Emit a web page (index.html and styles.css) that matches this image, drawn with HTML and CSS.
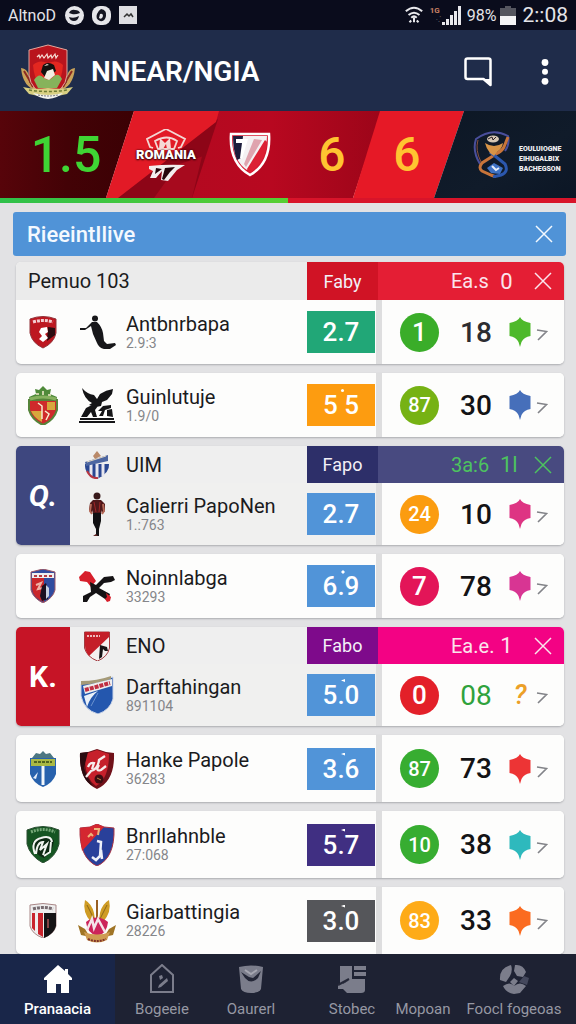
FILE: index.html
```html
<!DOCTYPE html>
<html lang="en">
<head>
<meta charset="utf-8">
<meta name="viewport" content="width=device-width, initial-scale=1">
<title>NNEAR/NGIA</title>
<link rel="stylesheet" href="styles.css">
</head>
<body>
<svg class="defs" aria-hidden="true">
  <symbol id="close" viewBox="0 0 18 18"><path d="M1 1 17 17M17 1 1 17" fill="none" stroke="currentColor" stroke-width="1.5"/></symbol>
  <symbol id="next" viewBox="0 0 12 14"><path d="M1 2 10.500 3.500 2 12" fill="none" stroke="currentColor" stroke-width="1.600"/></symbol>
  <symbol id="badge" viewBox="0 0 22 30"><path d="M11 0Q13 4.500 21.500 6V19Q15 20 12.500 25L11 30 9.500 25Q7 20 .5 19V6Q9 4.500 11 0Z" fill="currentColor"/></symbol>
</svg>

<div class="status">
  <span class="carrier">AltnoD</span>
  <svg width="19" height="19" viewBox="0 0 19 19"><circle cx="9.500" cy="9.500" r="9.500" fill="#e6e6ea"/><path d="M4 7q2-4 6-3 4 0 5 3-5 2-8 1M4 11q5 2 10-1-1 5-5 5-4 0-5-4z" fill="#151622"/></svg>
  <svg class="gap-a" width="19" height="19" viewBox="0 0 19 19"><rect width="19" height="19" rx="8" fill="#e6e6ea"/><path d="M9 3q6 1 5 7-1 6-6 5-5-2-3-7 1-3 4-5z" fill="#151622"/><path d="M8 8q3-1 3 2-1 4-4 2z" fill="#e6e6ea"/></svg>
  <svg class="gap-a" width="18" height="18" viewBox="0 0 18 18"><rect width="18" height="18" fill="#dedee2"/><path d="m5 11 3-3 2 2 2-2 2 3" fill="none" stroke="#333" stroke-width="1.500"/></svg>
  <span class="spacer"></span>
  <svg width="20" height="20" viewBox="0 0 22 20" fill="none" stroke="#e8e8ec" stroke-width="2.200"><path d="M2 6q9-8 18 0M5 10q6-5 12 0M8 13q3-3 6 0M11 13v5M6 18l2-2M16 18l-2-2"/></svg>
  <span class="network"><b>1G</b><i>·⁚</i></span>
  <svg width="19" height="19" viewBox="0 0 19 19" fill="#e8e8ec"><path d="M0 19v-3h3v3zM4 19v-6h3v6zM8 19V9h3v10zM12 19V5h3v14zM16 19V0h3v19z"/></svg>
  <span class="percent">98%</span>
  <svg width="16" height="19" viewBox="0 0 16 19"><path d="M5 0h6v2h5v8H0V2h5z" fill="#55565f"/><path d="M0 10h16v9H0z" fill="#f4f4f6"/></svg>
  <time class="clock">2::08</time>
</div>

<header class="appbar">
  <svg class="club" viewBox="0 0 56 56" width="56" height="56">
    <path d="M1 24q9 1 8 14l8 8Q3 44 1 24zM55 24q-9 1-8 14l-8 8Q53 44 55 24z" fill="#c9a35a"/>
    <path d="M4 27q5 8 9 16M52 27q-5 8-9 16" stroke="#8c2a20" stroke-width="2" fill="none"/>
    <path d="M9 6 28 1l19 5v25q-2 16-19 21Q11 47 9 31z" fill="#b9141d" stroke="#e2a79d"/>
    <path d="M13 21q6-6 15-2 9-4 15 2-1 14-6 18H19q-5-5-6-18z" fill="#e32720"/>
    <path d="M14 36q5-8 10-2 4 3 8 0 6-7 10 1l-5 9H18z" fill="#86b35b"/>
    <path d="M23 21q5-4 11 0l2 6-4 3q-2 5-6 4l-5-6z" fill="#14110f"/>
    <path d="m27 27 6-2 2 6-6 5-5-2zM24 22l3-2 2 1z" fill="#f3eee2"/>
    <path d="M3 43q10 3 25 1 15 2 25-1l-6 7q-19 5-38 0z" fill="#d8cf82"/>
    <path d="M9 46q19 3 38 0" stroke="#6f7d34" stroke-width="1.500" stroke-dasharray="3 2" fill="none"/>
    <path d="M13 49q15 4 30 0-5 5-15 6-10-1-15-6z" fill="#f2f2ee"/>
    <path d="M18 51q10 2 20 0" stroke="#777" stroke-dasharray="2 1" fill="none"/>
    <path d="m17 13 2-2 1 3 2-3 2 3 3-4 1 4 3-3 1 3 3-4 1 4 2-3" fill="none" stroke="#f6dcd4" stroke-width="1.200"/>
  </svg>
  <h1>NNEAR/NGIA</h1>
  <button class="icon" type="button" aria-label="Messages"><svg width="28" height="30" viewBox="0 0 28 30"><path d="M3.500 1.500h21q2 0 2 2V28l-7-6h-16q-2 0-2-2V3.500q0-2 2-2z" fill="none" stroke="#fff" stroke-width="2.500" stroke-linejoin="round"/><path d="m19 22 7 6v-6z" fill="#fff"/></svg></button>
  <button class="icon more" type="button" aria-label="More options"><svg width="8" height="26" viewBox="0 0 8 26" fill="#fff"><circle cx="4" cy="3.500" r="3.400"/><circle cx="4" cy="12.800" r="3"/><circle cx="4" cy="22.300" r="3.400"/></svg></button>
</header>

<section class="banner">
  <svg class="panels" viewBox="0 0 576 88" preserveAspectRatio="none" aria-hidden="true">
    <defs>
      <linearGradient id="dark"><stop offset="0" stop-color="#57040a"/><stop offset=".5" stop-color="#430206"/><stop offset="1" stop-color="#3b0104"/></linearGradient>
      <linearGradient id="mid"><stop offset="0" stop-color="#b00a20"/><stop offset=".6" stop-color="#b80820"/><stop offset="1" stop-color="#9c0519"/></linearGradient>
      <linearGradient id="navy" x2="1" y2="1"><stop offset="0" stop-color="#0d1725"/><stop offset=".6" stop-color="#101b2a"/><stop offset="1" stop-color="#0c1625"/></linearGradient>
    </defs>
    <path d="M0 0h134l-28 88H0z" fill="url(#dark)"/>
    <path d="M218 0h164l-29 88H106z" fill="url(#mid)"/>
    <path d="m218 8-26 80h-86z" fill="#8d0517"/>
    <path d="m178 54-24 34h38l10-42z" fill="#a70a1e"/>
    <path d="M134 0h85l-3 11-98 77h-12z" fill="#e21a26"/>
    <path d="M380 0h84l-30 88h-81z" fill="#e61926"/>
    <path d="M464 0h112v88H434z" fill="url(#navy)"/>
  </svg>
  <div class="slots">
    <strong class="odds">1.5</strong>
    <div class="romania">
      <svg width="46" height="52" viewBox="0 0 46 52" aria-hidden="true"><path d="m10 19-3-1-3-8L19 2l4-2 4 2 15 8-4 8-3 1M12 12q12-7 22 0l-3 8H15z" fill="none" stroke="#f4d7d4" stroke-width="1.800"/><path d="m17 9 5 5 5-5 1 11h-4l-1-5-3 5h-4z" fill="#f6d9d6"/><path d="M6 37q18-2 36-1l-8 5-9 11-7-1 1-9-6 7H7l3-7-4-2z" fill="#f3eeee"/><path d="m22 39 10-1-5 5-6 8-2-1zM13 39l6 1-7 5z" fill="#25060c"/></svg>
      <span>ROMANIA</span>
    </div>
    <svg width="42" height="45" viewBox="0 0 42 45" aria-hidden="true"><path d="M2 2h38q2 29-19 41Q0 31 2 2z" fill="#d51931" stroke="#fff" stroke-width="2.500"/><path d="M4 4h34q0 9-4 16L18 38Q3 28 4 4z" fill="#f4f1f3"/><path d="M4 4h10l-2 22-4 2Q4 18 4 4z" fill="#1d1d3c"/><path d="M7 7h12l-6 20-2-1 2-15H7z" fill="#fff"/><path d="m25 7 8 1-16 27-2-3z" fill="#dfa3ae"/><path d="m36 8 2 2q-1 20-17 31l-3-4z" fill="#dc2034"/></svg>
    <strong class="six">6</strong>
    <strong class="six">6</strong>
    <div class="sponsor">
      <svg width="38" height="47" viewBox="0 0 38 47" aria-hidden="true" fill="none"><path d="M7 33Q-1 20 3 8 19-4 35 5q2 8-3 15" stroke="#4a4f9c" stroke-width="2"/><path d="M8 31Q2 19 5 9" stroke="#8a513f"/><path d="m35 6-4 10q-2 4-8 7L9 32q-4 5 0 8l9 4 5 2" stroke="#c8743a" stroke-width="3"/><path d="m17 21 5 4 10 8q4 8-4 11l-8 2" stroke="#2b57ae" stroke-width="3"/><path d="M12 12q9 6 18 0-1 6-6 9l-3 4-4-3q-4-5-5-10z" fill="#d79447"/><ellipse cx="20" cy="8" rx="6" ry="3.500" fill="#d6c7b4"/><path d="m15 8 4-2 1 3 3-3" stroke="#2a2026"/><path d="m14 37 7-5 9 5-3 6-9-1z" fill="#3f72c4"/><path d="m19 35 4 4 3-2" stroke="#e7edf8" stroke-width="2"/></svg>
      <p>EOULUIOGNE<br>EIHUGALBIX<br>BACHEGSON</p>
    </div>
  </div>
</section>
<div class="track"><div class="fill"></div></div>

<main>
  <div class="section-bar">
    <h2>RieeintIlive</h2>
    <button type="button" aria-label="Close RieeintIlive"><svg width="18" height="18"><use href="#close"/></svg></button>
  </div>

  <article class="card">
    <div class="head red">
      <h3>Pemuo 103</h3><span class="tab">Faby</span>
      <div class="bar"><span class="stat">Ea.s</span><span class="count">0</span><button type="button" aria-label="Close"><svg width="18" height="18"><use href="#close"/></svg></button></div>
    </div>
    <div class="row">
      <svg width="28" height="33" viewBox="0 0 28 33"><path d="M1 3q13-5 26 0v14q-2 10-13 15Q3 27 1 17z" fill="#bd1720" stroke="#91333a"/><path d="M4 6q10-3 20 0" stroke="#f3cdd0" stroke-width="3" stroke-dasharray="3 1" fill="none"/><path d="m19 11 7 1v7l-8 6z" fill="#2c0c10"/><path d="m12 12 6-1 1 5-3 2 3 4-5 4-4-3 3-3-3-4z" fill="#fff"/></svg>
      <svg width="37" height="35" viewBox="0 0 37 35"><circle cx="16" cy="3.500" r="3" fill="#17171a"/><path d="M1 13h6l6-6 5 0q5 5 6 11l1 8 3 3 8-1 1 2-6 4h-6q-5-1-7-6l-4-9-2-8-6 4H1z" fill="#17171a"/></svg>
      <div class="team"><b>Antbnrbapa</b><small>2.9:3</small></div>
      <div class="tile green">2.7</div>
      <div class="result"><span class="ball single g1">1</span><span class="num soft">18</span><svg class="mark m-green"><use href="#badge"/></svg><a href="#t1" aria-label="Open Antbnrbapa"><svg width="12" height="14"><use href="#next"/></svg></a></div>
    </div>
  </article>

  <article class="card">
    <div class="row">
      <svg width="32" height="39" viewBox="0 0 32 39"><path d="M8 3l4 1 4-4 4 4 4-1-1 5 7 3-1 5H3l-1-5 7-3z" fill="#4f8a3a"/><path d="M2 14h28v10q-3 10-14 15Q5 34 2 24z" fill="#cf2a2b" stroke="#56843a" stroke-width="2"/><path d="M4 25h11v11Q7 32 4 25zM20 16h8v8h-8z" fill="#d7a73c"/><path d="m11 17 4 3v13m3-8 4 3-3 6M9 8h3m4-3v4m5 0h3" stroke="#f7ecd0" stroke-width="1.500" fill="none"/><path d="M3 13q13-4 26 0" stroke="#87b15f" stroke-width="3" fill="none"/></svg>
      <svg width="36" height="35" viewBox="0 0 36 35" fill="#151517"><path d="M3 0q5 6 12 7l3 4 3-5q6-4 13-5l-1 5-5 6-5 2-1 4-5 1-7-2 3-2Q5 11 3 0zM2 29l5-9 6-3 6 1-3 4 2 7h-4l-2-5-4 5zM19 23l5-5 8-1v3l-6 2-2 6h-4l3-5zM28 22l5-1 1 8-6-1z"/><path d="M1 30h34v2H1zM0 33h36v2H0z"/></svg>
      <div class="team"><b>Guinlutuje</b><small>1.9/0</small></div>
      <div class="tile orange">5 5<i class="dot"></i></div>
      <div class="result"><span class="ball g2">87</span><span class="num">30</span><svg class="mark m-blue"><use href="#badge"/></svg><a href="#t2" aria-label="Open Guinlutuje"><svg width="12" height="14"><use href="#next"/></svg></a></div>
    </div>
  </article>

  <article class="card group">
    <div class="letter indigo"><em>Q.</em></div>
    <div class="rows">
      <div class="head indigo">
        <svg width="26" height="28" viewBox="0 0 26 28"><path d="M1 13h24q1 9-12 15Q0 23 1 13z" fill="#2a4792"/><path d="M7 13v12M13 13v14M19 13v12" stroke="#e8e7ee" stroke-width="3"/><path d="m1 11 23-7v6L2 15z" fill="#4d66a1"/><path d="m3 11 19-6" stroke="#e1d7c4"/><path d="m9 5 4-5 4 5-6 3z" fill="#b98969"/><path d="M3 20q4 8 11 7" stroke="#b63642" fill="none" stroke-width="2"/></svg>
        <h3>UIM</h3><span class="tab">Fapo</span>
        <div class="bar lime"><span class="stat">3a:6</span><span class="count">1l</span><button type="button" aria-label="Close UIM"><svg width="18" height="18"><use href="#close"/></svg></button></div>
      </div>
      <div class="row">
        <svg width="18" height="45" viewBox="0 0 18 45"><circle cx="9" cy="4" r="3.500" fill="#38191a"/><path d="M5 8h8l4 4v7l-3 3-1-4v4H5v-4l-1 4-3-4 1-7z" fill="#4f1719"/><path d="m3 12-1 7 2 3M15 12l1 7-2 3" stroke="#b66a58" stroke-width="2" fill="none"/><path d="M5 21h8v8l-2 8v7H8v-7L5 31z" fill="#101012"/><path d="m6 10 2 10M12 10l-1 10" stroke="#9e2526" stroke-width="1"/><path d="m8 42-3 2h5z" fill="#5c2220"/></svg>
        <div class="team"><b>Calierri PapoNen</b><small>1.:763</small></div>
        <div class="tile blue">2.7</div>
        <div class="result"><span class="ball amber">24</span><span class="num">10</span><svg class="mark m-pink"><use href="#badge"/></svg><a href="#t3" aria-label="Open Calierri PapoNen"><svg width="12" height="14"><use href="#next"/></svg></a></div>
      </div>
    </div>
  </article>

  <article class="card">
    <div class="row">
      <svg width="28" height="34" viewBox="0 0 28 34"><path d="M2 3 14 0l12 3v18q-2 8-12 13Q4 29 2 21z" fill="#304c9f" stroke="#9d5966"/><path d="M3 8h12v25Q4 29 3 20z" fill="#c9272b"/><path d="M3 4h22v5H3z" fill="#eee"/><path d="M5 7h18" stroke="#b63c43" stroke-width="2" stroke-dasharray="3 2"/><path d="m7 16 5-2-3 6 5-1" stroke="#efb3a7" stroke-width="2" fill="none"/><path d="m13 17 4-3 2 6v10l-6 2-2-5z" fill="#1b1020"/><path d="m17 16 3 3v8l-3 3" fill="#c8d0e0"/></svg>
      <svg width="38" height="33" viewBox="0 0 38 33"><path d="m1 7 6-6 5 1 6 9-5 6-4-5-7-1z" fill="#d71f2b"/><path d="m12 12 6 3 8-8 9-1 2 4-4 2-7 1-5 5 11 6-2 7-6-4-6-4-6 4-3 5H5v-6l8-4z" fill="#151315"/><path d="m28 23 5 4-1 4-3 1-2-3 2-2z" fill="#d71f2b"/></svg>
      <div class="team"><b>Noinnlabga</b><small>33293</small></div>
      <div class="tile blue">6.9<i class="tick plus"></i></div>
      <div class="result"><span class="ball single rose">7</span><span class="num">78</span><svg class="mark m-violet"><use href="#badge"/></svg><a href="#t4" aria-label="Open Noinnlabga"><svg width="12" height="14"><use href="#next"/></svg></a></div>
    </div>
  </article>

  <article class="card group">
    <div class="letter crimson"><em class="plain">K.</em></div>
    <div class="rows">
      <div class="head magenta">
        <svg width="26" height="30" viewBox="0 0 26 30"><path d="M.5 1h25v16q-2 9-12 13Q3 26 .5 17z" fill="#f4f1f0" stroke="#a23a3f"/><path d="M1 1h24v5L5 25Q1 20 1 15z" fill="#c41e28"/><path d="M3 5h13" stroke="#eeb9bb" stroke-width="2" stroke-dasharray="2 1"/><path d="m16 14 7 2 1 4h-3l-2-2-1 8-3 2z" fill="#161315"/></svg>
        <h3>ENO</h3><span class="tab">Fabo</span>
        <div class="bar"><span class="stat">Ea.e.</span><span class="count">1</span><button type="button" aria-label="Close ENO"><svg width="18" height="18"><use href="#close"/></svg></button></div>
      </div>
      <div class="row">
        <svg width="34" height="38" viewBox="0 0 34 38"><path d="M1 8Q17 6 33 1v22q-3 11-15 15Q4 34 1 20z" fill="#2457ae" stroke="#c9d4e8"/><path d="M1 5Q17 5 31 0v3Q17 8 1 9z" fill="#a59a78"/><path d="m3 10 29-7v7L5 18z" fill="#eee"/><path d="m5 14 25-7" stroke="#c12f43" stroke-width="4" stroke-dasharray="4 1" fill="none"/><path d="m4 20 14-5Q10 21 7 31z" fill="#e9f0f8"/><path d="m18 17-7 13" stroke="#6c93cf"/></svg>
        <div class="team"><b>Darftahingan</b><small>891104</small></div>
        <div class="tile blue">5.0<i class="tick"></i></div>
        <div class="result"><span class="ball single scarlet">0</span><span class="num lime-num">08</span><span class="query">?</span><a href="#t5" aria-label="Open Darftahingan"><svg width="12" height="14"><use href="#next"/></svg></a></div>
      </div>
    </div>
  </article>

  <article class="card tall">
    <div class="row">
      <svg width="28" height="36" viewBox="0 0 28 36"><path d="m3 7 4-5 4 1 3-3 3 3 4-1 4 5z" fill="#4d7782"/><path d="M1 7h26v16q-3 9-13 13Q4 32 1 23z" fill="#2862ad"/><path d="M2 8h24v7H2z" fill="#aab944"/><path d="M5 11h18" stroke="#50641f" stroke-width="2" stroke-dasharray="3 1"/><path d="M14 15v19" stroke="#f3f7fb" stroke-width="3"/><path d="m4 27 5-6-2 7z" fill="#e5eefa"/></svg>
      <svg width="36" height="40" viewBox="0 0 36 40"><path d="m1 4 8-1 9-3 9 3 8 1q1 28-17 36Q0 32 1 4z" fill="#701119"/><path d="m6 5 12-4 12 4q0 25-13 32Q5 29 6 5z" fill="#c6202b"/><path d="M1 4 9 3 5 19q3 10 9 18Q0 30 1 4z" fill="#2b0b10"/><path d="m7 28 5-6q7-2 8-11l6-4M9 18q2-5 6-4l-2 6M20 16q-4 7 2 5l5-4" fill="none" stroke="#f7eded" stroke-width="2.300"/><circle cx="20" cy="30" r="4.500" fill="#3c0d12"/><path d="m18 29 4 2" stroke="#b84"/></svg>
      <div class="team"><b>Hanke Papole</b><small>36283</small></div>
      <div class="tile blue">3.6<i class="tick"></i></div>
      <div class="result"><span class="ball g3">87</span><span class="num">73</span><svg class="mark m-red"><use href="#badge"/></svg><a href="#t6" aria-label="Open Hanke Papole"><svg width="12" height="14"><use href="#next"/></svg></a></div>
    </div>
  </article>

  <article class="card tall">
    <div class="row">
      <svg width="34" height="37" viewBox="0 0 34 37"><path d="M1 4Q17-3 33 4v14q-3 13-16 19Q4 30 1 18z" fill="#155522" stroke="#2c4f33"/><path d="M5 6q12-5 24 0" stroke="#76a878" stroke-width="3" stroke-dasharray="2 1" fill="none"/><path d="M6 18q3-8 14-6l8 2q-1 12-10 18Q8 28 6 18z" fill="#0d2813"/><path d="M9 28q-5-13 6-16 10-3 11 4M10 28q1-12 7-12l-3 8 7-6-4 11m8-13-1 10-6 4" fill="none" stroke="#f0f4ef" stroke-width="2"/></svg>
      <svg width="36" height="42" viewBox="0 0 36 42"><path d="m1 4 10-1 7-3 7 3 10 1q1 30-17 38Q0 34 1 4z" fill="#29409a" stroke="#aa3444"/><path d="m1 4 10-1 7-3 7 3-22 24Q1 15 1 4z" fill="#d42730"/><path d="m9 13 3-3 2 2m1-7h5l-1 6" stroke="#efb67c" stroke-width="2" fill="none"/><path d="m18 17 4 1-1 14-4 4-4-3m9-7 1 9" fill="none" stroke="#eef0f8" stroke-width="2.500"/></svg>
      <div class="team"><b>Bnrllahnble</b><small>27:068</small></div>
      <div class="tile purple">5.7<i class="tick"></i></div>
      <div class="result"><span class="ball g3">10</span><span class="num">38</span><svg class="mark m-teal"><use href="#badge"/></svg><a href="#t7" aria-label="Open Bnrllahnble"><svg width="12" height="14"><use href="#next"/></svg></a></div>
    </div>
  </article>

  <article class="card tall">
    <div class="row">
      <svg width="28" height="35" viewBox="0 0 28 35"><path d="M1 2q13-3 26 0v21q-2 8-13 12Q3 31 1 23z" fill="#eee" stroke="#a98787"/><path d="M3 10h3v18l-3-3zM9 10h5v24l-5-3z" fill="#c9242d"/><path d="M15 10h12v13q-2 8-12 12z" fill="#151315"/><path d="M4 6q10-3 20 0" fill="none" stroke="#776b70" stroke-width="3" stroke-dasharray="3 1"/><path d="M19 16v9" stroke="#a55" stroke-width="1.500"/></svg>
      <svg width="38" height="44" viewBox="0 0 38 44"><path d="M7 1q7 4 9 13l1 7-4 2Q4 13 7 1zM31 1q-7 4-9 13l-1 7 4 2Q34 13 31 1z" fill="#cf9c24"/><path d="m9 6 7 14M29 6l-7 14" stroke="#8d6719"/><path d="M19 1v19" stroke="#975f23" stroke-width="2"/><path d="M8 23q11-9 22 0-1 12-11 14Q9 34 8 23z" fill="#cc245a"/><path d="m9 31 5-11 2 9 4-9 7 13" stroke="#f4e4e9" stroke-width="2.500" fill="none"/><path d="m0 26 7 4 5 8-9-2zM38 26l-7 4-5 8 9-2z" fill="#a07526"/><path d="M6 33q13 5 26 0l-3 8q-10 5-20 0z" fill="#cf9c52"/><path d="M10 40q9 4 18 0" stroke="#7e3027" stroke-width="2" stroke-dasharray="2 1" fill="none"/></svg>
      <div class="team"><b>Giarbattingia</b><small>28226</small></div>
      <div class="tile gray">3.0<i class="tick"></i></div>
      <div class="result"><span class="ball gold">83</span><span class="num">33</span><svg class="mark m-orange"><use href="#badge"/></svg><a href="#t8" aria-label="Open Giarbattingia"><svg width="12" height="14"><use href="#next"/></svg></a></div>
    </div>
  </article>
</main>

<nav>
  <a class="active" href="#home" aria-current="page"><svg width="30" height="30" viewBox="0 0 30 30"><path d="m15 1 7 6V5h3v5l4 4v2h-3v13h-8v-9h-5v9H4V16H1v-2z" fill="#fff"/></svg><span>Pranaacia</span></a>
  <a href="#bogeeie"><svg width="30" height="30" viewBox="0 0 30 30"><path d="M4 11 15 1l11 10v17H4z" fill="none" stroke="#7b7d8b" stroke-width="2"/><path d="m12 21 8-7 1 3-7 6-3 1zM12 12l3-1 1 3-3 2z" fill="#7b7d8b"/></svg><span>Bogeeie</span></a>
  <a href="#oaurerl"><svg width="30" height="30" viewBox="0 0 30 30"><path d="M3 3q12-3 24 0l-2 22q-2 4-10 4T5 25z" fill="#7b7d8b"/><path d="m5 8 8 5 4 1 8-7-3 7q-7 7-13 0z" fill="#242737"/><path d="m9 6 6 4 6-4" stroke="#a6a7b1" stroke-width="2" fill="none"/></svg><span>Oaurerl</span></a>
  <a class="offset" href="#stobec"><svg width="30" height="30" viewBox="0 0 30 30" fill="#7b7d8b"><path d="M3 2h12v13l-7 3-5 4zM17 2h12v4H17zM17 8h12v4H17zM6 20l8-5h14v11q0 3-4 3H10l-4-4H1v-4z"/><path d="m1 21 11-6" stroke="#242737" stroke-width="2"/></svg><span>Stobec</span></a>
  <a href="#mopoan"><svg width="30" height="30" aria-hidden="true"></svg><span>Mopoan</span></a>
  <a href="#food"><svg width="30" height="30" viewBox="0 0 30 30"><path d="M12 1q2 5-1 11l-4 6-6-2Q0 4 12 1zM16 1q8-1 11 7l-3 5-6-1-3-5z" fill="#7b7d8b"/><path d="m25 12 5 2-2 7-8-3z" fill="#44485c"/><path d="m15 14 4 3-4 5-4-4zM4 22q7-5 11 0 6-5 12 0l-6 7-6 1q-8-1-11-8z" fill="#7b7d8b"/></svg><span>Foocl fogeoas</span></a>
</nav>
</body>
</html>
```
FILE: styles.css
```css
* { box-sizing: border-box; }
body {
  margin: 0;
  height: 100vh;
  display: flex;
  flex-direction: column;
  background: #e2e2e4;
  color: #1b1b1d;
  font-family: Roboto, "Liberation Sans", sans-serif;
}
h1, h2, h3, p { margin: 0; }
button { padding: 0; border: 0; background: none; color: inherit; font: inherit; }
a { color: inherit; text-decoration: none; }
button svg, a svg { display: block; }
.defs { position: absolute; width: 0; height: 0; }

.status {
  flex: none;
  display: flex;
  align-items: center;
  height: 30px;
  padding: 0 8px;
  background: #0a0c1c;
  color: #e4e4e8;
}
.status svg { flex: none; }
.carrier { width: 57px; font-size: 16px; }
.gap-a { margin-left: 8px; }
.spacer { flex: 1; }
.network { display: grid; margin: 0 2px; width: 14px; font-size: 8px; line-height: 9px; text-align: right; }
.network b { color: #c98264; }
.network i { color: #777; }
.percent { margin: 0 4px 0 6px; font-size: 16px; }
.clock { margin-left: 6px; font-size: 21px; }

.appbar {
  flex: none;
  display: flex;
  align-items: center;
  gap: 15px;
  height: 81px;
  padding: 2px 27px 0 20px;
  background: #1f2c4a;
  color: #fff;
}
.appbar h1 { flex: 1; font-size: 28px; font-weight: 600; white-space: nowrap; }
.more { width: 8px; margin-left: 34px; }

.banner { position: relative; flex: none; height: 87px; overflow: hidden; }
.panels { position: absolute; inset: 0; width: 100%; height: 100%; }
.slots {
  position: relative;
  display: grid;
  grid-template-columns: 132fr 68fr 100fr 64fr 86fr 126fr;
  align-items: center;
  justify-items: center;
  height: 100%;
}
.odds { color: #3fd534; font-size: 50px; line-height: 56px; font-weight: 500; }
.six { color: #ffc431; font-size: 48px; line-height: 56px; font-weight: 500; }
.romania { display: grid; place-items: center; }
.romania > * { grid-area: 1 / 1; }
.romania span { color: #fff; font-size: 13px; font-weight: 900; text-shadow: 0 0 2px #2a0508, 0 1px 2px #2a0508; }
.sponsor { display: flex; align-items: center; gap: 8px; width: 100%; padding-left: 23px; }
.sponsor svg { flex: none; }
.sponsor p { color: #f1f1f3; font-size: 7px; line-height: 10px; font-weight: 900; padding-top: 8px; }
.track { flex: none; height: 5px; background: #d8142a; }
.fill { width: 50%; height: 100%; background: linear-gradient(90deg, #2fc04a, #58cf33); }

main { flex: 1; min-height: 0; overflow: auto; scrollbar-width: none; padding: 9px 12px 0 16px; }
.section-bar {
  display: flex;
  align-items: center;
  justify-content: space-between;
  height: 44px;
  margin: 0 -2px 6px -3px;
  padding: 0 13px 0 14px;
  border-radius: 3px;
  background: #5093d7;
  color: #f4f9ff;
}
.section-bar h2 { font-size: 22px; font-weight: 500; }

.card {
  margin-bottom: 9px;
  overflow: hidden;
  border-radius: 5px;
  background: #fdfdfc;
  box-shadow: 0 1px 2px #aaabb0;
}
.head, .row { display: grid; align-items: center; }
.head { grid-template-columns: minmax(0, 1fr) 71px 186px; height: 38px; background: #ebebeb; }
.head h3 { font-size: 20px; font-weight: 400; }
.card > .head h3 { padding-left: 12px; }
.tab { display: grid; place-items: center; height: 100%; color: #f3f0f7; font-size: 18px; }
.bar { display: flex; align-items: center; height: 100%; padding: 0 12px 0 73px; color: #fbe4ec; font-size: 20px; }
.stat { flex: 1; }
.count { width: 13px; margin-right: 21px; text-align: center; font-size: 22px; }
.red .tab { background: #d01325; }
.red .bar { background: #e41e34; }
.indigo .tab { background: #2d2f69; }
.indigo .bar { background: #484a80; }
.indigo .lime { color: #4dc35f; }
.magenta .tab { background: #7e0a8b; }
.magenta .bar { background: #f30284; }

.row { grid-template-columns: 54px 54px minmax(0, 1fr) 68px 189px; height: 64px; }
.row > svg, .head > svg { justify-self: center; }
.team { display: grid; padding-left: 2px; white-space: nowrap; }
.team b { font-size: 20px; line-height: 22px; font-weight: 400; }
.team small { color: #85868a; font-size: 14px; line-height: 17px; }
.tile {
  position: relative;
  display: grid;
  place-items: center;
  height: 42px;
  color: #fff;
  font-size: 26px;
  line-height: 30px;
  font-weight: 500;
}
.tile i { position: absolute; top: 5px; left: 50%; background: #fff; }
.dot { width: 3px; height: 3px; border-radius: 50%; }
.tick { width: 4px; height: 3px; clip-path: polygon(0 50%, 100% 0, 100% 100%); }
.plus { height: 4px; clip-path: polygon(50% 0, 100% 50%, 50% 100%, 0 50%); }
.green { background: #21a777; }
.orange { background: #fd9c10; }
.blue { background: #5194d8; }
.purple { background: #402f82; }
.gray { background: #55565a; }

.result {
  display: flex;
  align-items: center;
  height: 100%;
  padding-left: 18px;
  border-left: 6px solid #dededf;
  margin-left: 1px;
  background: #fdfdfc;
}
.ball {
  display: grid;
  place-items: center;
  flex: none;
  width: 39px;
  height: 39px;
  border-radius: 50%;
  color: #fff;
  font-size: 20px;
  font-weight: 500;
}
.single { font-size: 26px; }
.g1 { background: #3aad29; }
.g2 { background: #76b214; }
.g3 { background: #37ad31; }
.amber { background: #fb9c10; }
.gold { background: #feab18; }
.rose { background: #e31558; }
.scarlet { background: #e32029; }
.num { width: 56px; margin-left: 9px; color: #131315; text-align: center; font-size: 28px; font-weight: 500; }
.soft { color: #2d2d30; }
.lime-num { color: #2fa23c; font-weight: 400; }
.mark { flex: none; width: 22px; height: 30px; margin: 0 5px; }
.query { width: 22px; margin: 0 5px; color: #eca027; font-size: 27px; font-weight: 500; font-style: italic; text-align: center; }
.result a { margin-top: 6px; color: #828388; }
.m-green { color: #4eb92b; }
.m-blue { color: #466fba; }
.m-pink { color: #de3483; }
.m-violet { color: #d83593; }
.m-red { color: #ed3435; }
.m-teal { color: #2eb9bd; }
.m-orange { color: #fb6b20; }

.group { display: grid; grid-template-columns: 54px minmax(0, 1fr); }
.letter { display: grid; place-items: center; color: #fff; }
.letter em { font-size: 30px; font-weight: 700; }
.letter .plain { font-style: normal; }
.letter.indigo { background: #3e477f; }
.crimson { background: #c61426; }
.group .rows { background: #f0f0ef; }
.group .head { grid-template-columns: 54px minmax(0, 1fr) 71px 186px; height: 37px; background: #efefef; }
.group .head h3 { padding-left: 2px; }
.group .row { grid-template-columns: 54px minmax(0, 1fr) 68px 189px; height: 62px; }
.tall .row { height: 67px; }

nav {
  flex: none;
  display: grid;
  grid-template-columns: 115fr 94fr 84fr 101fr 58fr 124fr;
  height: 70px;
  background: #1e2233;
  color: #9698a3;
  font-size: 15px;
}
nav a { display: grid; justify-items: center; align-content: center; gap: 5px; padding-top: 5px; white-space: nowrap; }
nav .offset { padding-left: 17px; }
nav span { line-height: 20px; }
nav .active { background: #192649; color: #fff; font-weight: 500; }
```
